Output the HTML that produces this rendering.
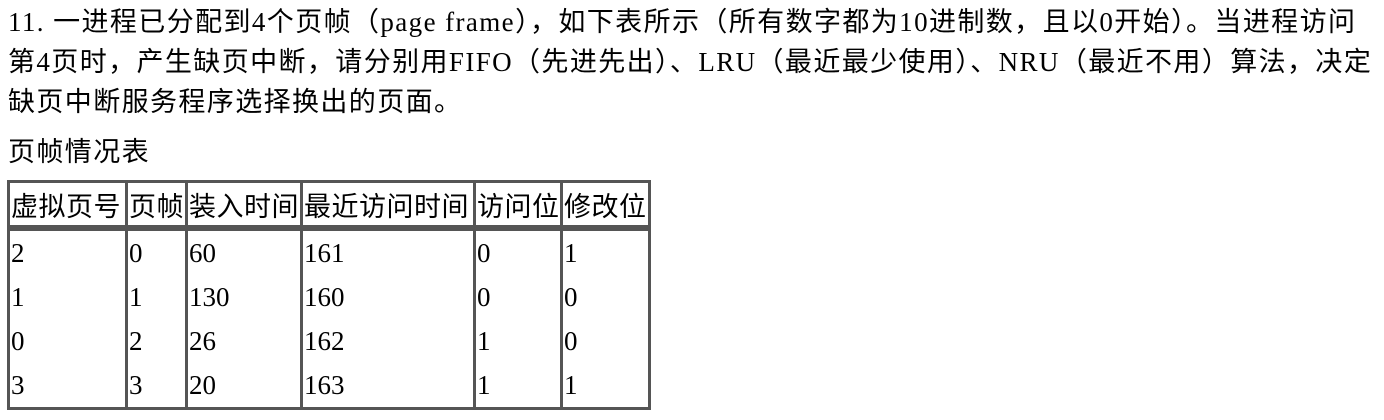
<!DOCTYPE html>
<html><head><meta charset="utf-8"><style>
body{margin:0;background:#fff;width:1384px;height:420px;overflow:hidden;font-family:"Liberation Serif","Noto Sans CJK SC",serif;color:#000;font-size:27px}
.l{position:absolute;left:8px;white-space:nowrap;line-height:30px;letter-spacing:1.4px}
table{position:absolute;left:7px;top:180px;border-collapse:collapse;border:3px solid #555;font-size:27px;table-layout:fixed}
td{border-left:3px solid #555;border-right:3px solid #555;padding:0 0 0 1px;height:44px;vertical-align:middle;white-space:nowrap;overflow:hidden}
tr.h td{height:42px;border-bottom:6px solid #555;letter-spacing:0.5px}
</style></head><body>
<div class="l" style="top:7px">11. 一进程已分配到4个页帧（page frame），如下表所示（所有数字都为10进制数，且以0开始）。当进程访问</div>
<div class="l" style="top:47px">第4页时，产生缺页中断，请分别用FIFO（先进先出）、LRU（最近最少使用）、NRU（最近不用）算法，决定</div>
<div class="l" style="top:87px">缺页中断服务程序选择换出的页面。</div>
<div class="l" style="top:137px">页帧情况表</div>
<table>
<col style="width:118px"><col style="width:60px"><col style="width:115px"><col style="width:173px"><col style="width:87px"><col style="width:88px">
<tr class="h"><td>虚拟页号</td><td>页帧</td><td>装入时间</td><td>最近访问时间</td><td>访问位</td><td>修改位</td></tr>
<tr><td>2</td><td>0</td><td>60</td><td>161</td><td>0</td><td>1</td></tr>
<tr><td>1</td><td>1</td><td>130</td><td>160</td><td>0</td><td>0</td></tr>
<tr><td>0</td><td>2</td><td>26</td><td>162</td><td>1</td><td>0</td></tr>
<tr><td>3</td><td>3</td><td>20</td><td>163</td><td>1</td><td>1</td></tr>
</table>
</body></html>
